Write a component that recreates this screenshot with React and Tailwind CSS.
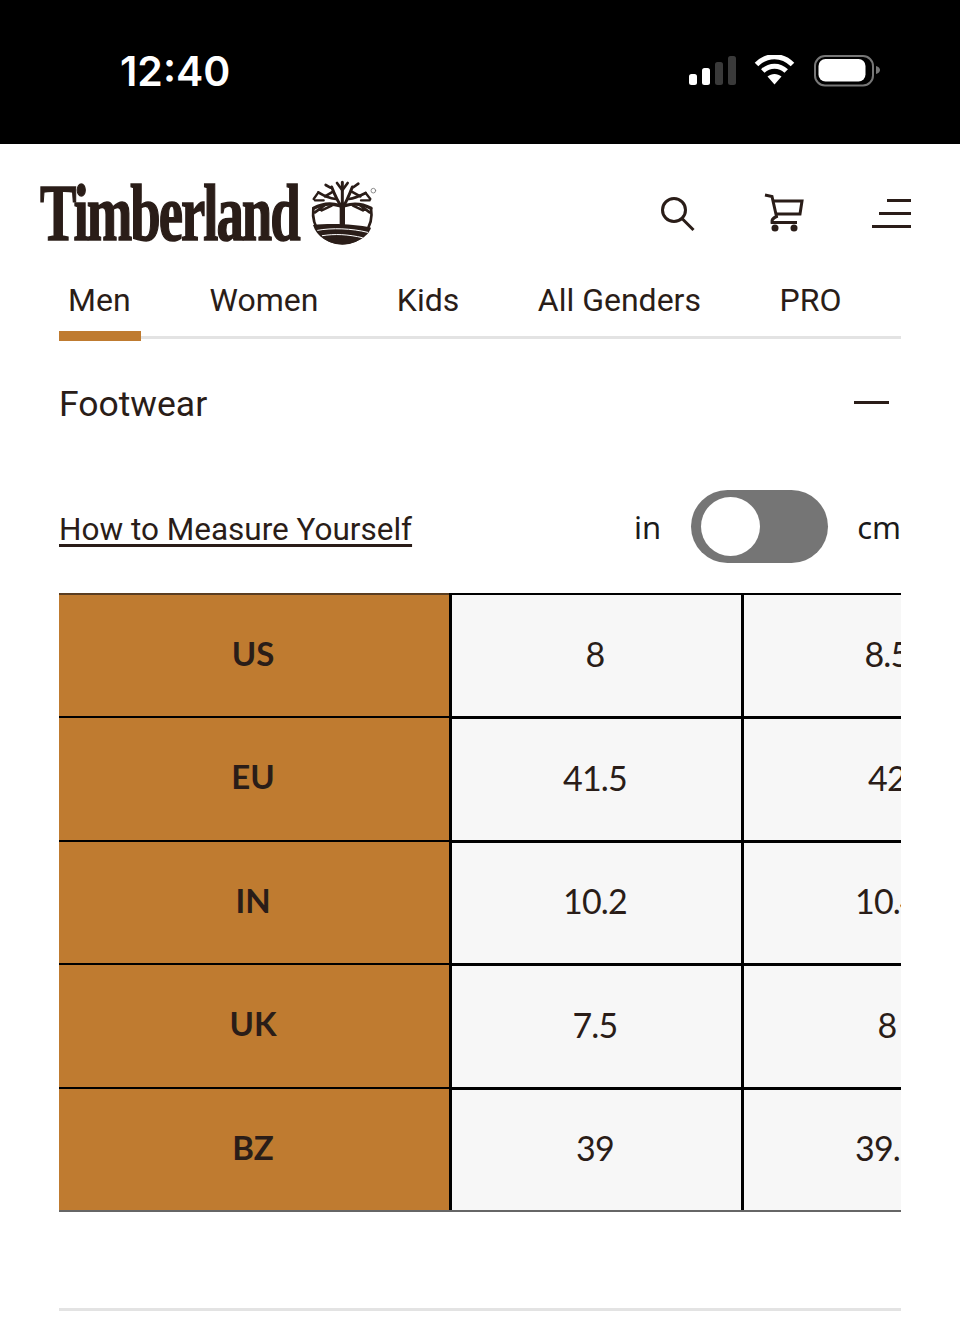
import React from 'react'

const tabs = ['Men', 'Women', 'Kids', 'All Genders', 'PRO']

const rows = [
  { label: 'US', values: ['8', '8.5'] },
  { label: 'EU', values: ['41.5', '42'] },
  { label: 'IN', values: ['10.2', '10.4'] },
  { label: 'UK', values: ['7.5', '8'] },
  { label: 'BZ', values: ['39', '39.5'] },
]

function StatusIcons() {
  return (
    <svg width="192" height="32" viewBox="689 56 192 32" fill="none">
      <rect x="689" y="75" width="8" height="11" rx="2.5" fill="#fff" />
      <rect x="702" y="69" width="8" height="17" rx="2.5" fill="#fff" />
      <rect x="715" y="63" width="8" height="23" rx="2.5" fill="#3a3a3a" />
      <rect x="728" y="57" width="8" height="29" rx="2.5" fill="#3a3a3a" />
      <path d="M756.5 65.5C767 55 782 55 792.5 65.5" stroke="#fff" strokeWidth="5" />
      <path d="M762.8 72C769.5 65.5 779.5 65.5 786.2 72" stroke="#fff" strokeWidth="5" />
      <path d="M767.5 77.5C771.5 74 777.5 74 781.5 77.5L774.5 85.5Z" fill="#fff" />
      <rect x="815" y="57" width="58" height="29.5" rx="10" stroke="#777" strokeWidth="2" />
      <rect x="818.5" y="60" width="47" height="22.5" rx="7" fill="#fff" />
      <path d="M876 67C879 68 880 69.5 880 71C880 72.500 879 74 876 75Z" fill="#777" />
    </svg>
  )
}

function TreeLogo() {
  return (
    <svg width="75" height="75" viewBox="0 0 225 225" fill="none" stroke="#2a1d18" strokeLinecap="round">
      {/* ring and ground */}
      <path d="M25 100C18 160 60 205 112 205C165 205 208 160 198 100" strokeWidth="8" />
      <path d="M24 150C70 144 150 146 198 158C190 185 150 208 112 208C70 208 35 185 24 150Z" fill="#2a1d18" stroke="none" />
      <path d="M38 166C80 158 140 160 188 172" stroke="#fff" strokeWidth="3" />
      <path d="M52 182C90 176 130 178 172 188" stroke="#fff" strokeWidth="3" />
      {/* trunk */}
      <path d="M112 152V92" strokeWidth="16" strokeLinecap="butt" />
      {/* canopy */}
      <path d="M112 100C100 82 90 62 80 36M112 100C124 82 132 62 142 36M112 100V22" strokeWidth="9" />
      <path d="M104 92C80 84 52 86 26 100M120 92C146 84 172 86 198 100" strokeWidth="10" />
      <path d="M92 72C76 70 56 62 40 52M132 72C148 70 166 62 182 54" strokeWidth="8" />
      <path d="M84 50L60 64M140 50L166 64M76 38L62 30M146 36L160 26M112 46L96 24M112 46L128 24" strokeWidth="8" />
      <path d="M62 88L30 112M162 88L194 112M80 92L50 106M144 92L174 106" strokeWidth="8" />
      <path d="M40 52L26 72M182 54L196 72M30 76L56 76M194 76L168 76" strokeWidth="7" />
      <circle cx="205" cy="47" r="7" strokeWidth="2.500" stroke="#777" />
    </svg>
  )
}

function Header() {
  return (
    <div className="flex items-start justify-between h-[126px] pl-[40px] pr-[49px] pt-[38px]">
      <div className="flex items-start">
        <div className="w-[265px] h-[64px]">
          <span className="block origin-left scale-x-[0.685] whitespace-nowrap font-['Liberation_Serif',serif] font-bold text-[80px] leading-[62px] tracking-[-3px] text-[#2a1d18] [-webkit-text-stroke:1.500px_#2a1d18]">
            Timberland
          </span>
        </div>
        <div className="-mt-[7px]">
          <TreeLogo />
        </div>
      </div>
      <div className="flex items-center gap-[68px] mt-[11px]">
        <svg width="36" height="38" viewBox="0 0 36 38" fill="none" stroke="#2a1d18" strokeWidth="3">
          <circle cx="14" cy="16" r="11.500" />
          <path d="M22 24.500L33.500 36" />
        </svg>
        <svg width="40" height="40" viewBox="0 0 40 40" fill="none" stroke="#2a1d18" strokeWidth="3">
          <path d="M1 2L8 3.500L12.500 23.500C9 25 7.500 27 8 29.500H33" />
          <path d="M9 8H38L36 21H12.500" />
          <circle cx="11" cy="35" r="3.500" fill="#2a1d18" stroke="none" />
          <circle cx="30" cy="35" r="3.500" fill="#2a1d18" stroke="none" />
        </svg>
        <div className="flex w-[39px] flex-col items-end gap-[10px]">
          <div className="h-[3px] w-[24px] bg-[#2a1d18]" />
          <div className="h-[3px] w-[32px] bg-[#2a1d18]" />
          <div className="h-[3px] w-[39px] bg-[#2a1d18]" />
        </div>
      </div>
    </div>
  )
}

function Tabs() {
  return (
    <div className="mx-[59px] flex h-[69px] gap-[58.500px] border-b-[3px] border-[#e3e3e3]">
      {tabs.map((tab, i) => (
        <div
          key={tab}
          className={`h-[71px] shrink-0 pt-[10px] text-[32px] leading-[40px] text-[#2a1d18] ${i === 0 ? 'w-[82px] border-b-[10px] border-[#bf7b30] pl-[9px]' : 'px-[10px]'}`}
        >
          {tab}
        </div>
      ))}
    </div>
  )
}

function SizeTable() {
  return (
    <div className="mx-[59px] overflow-hidden">
      {rows.map((row, r) => (
        <div key={row.label} className="flex h-[123.4px] w-[1000px]">
          <div className={`flex w-[390px] items-center justify-center bg-[#bf7b30] pb-[4px] pr-[2px] font-['Lato',sans-serif] text-[33px] font-bold text-[#2a1d18] ${r === 0 ? 'border-t-[2px] border-[#5a3d20]' : 'border-t-[2px] border-black'}`}>
            {row.label}
          </div>
          {row.values.map((value) => (
            <div
              key={value}
              className={`flex w-[292px] items-center justify-center border-l-[3px] border-black bg-[#f7f7f7] pb-[4px] pr-[3px] font-['Lato',sans-serif] text-[34px] tracking-[-0.8px] text-[#2a1d18] ${r === 0 ? 'border-t-[2px]' : 'border-t-[3px]'}`}
            >
              {value}
            </div>
          ))}
        </div>
      ))}
      <div className="h-[2px] bg-[#666]" />
    </div>
  )
}

export default function App() {
  return (
    <div className="h-[1322px] w-[960px] overflow-hidden bg-white font-['Roboto',sans-serif]">
      <div className="flex h-[144px] items-center justify-between bg-black pb-[2px] pl-[120px] pr-[79px]">
        <span className="mt-[2px] font-['Inter',sans-serif] text-[41px] font-semibold text-white">12:40</span>
        <StatusIcons />
      </div>
      <Header />
      <Tabs />
      <div className="mx-[59px] mt-[40px] flex h-[50px] items-center justify-between">
        <span className="text-[35.500px] leading-[50px] text-[#2a1d18]">Footwear</span>
        <div className="mb-[3px] mr-[12px] h-[3px] w-[35px] bg-[#2a1d18]" />
      </div>
      <div className="mx-[59px] mt-[61px] flex h-[73px] items-center justify-between">
        <a className="pt-[6px] text-[31.500px] leading-[40px] text-[#2a1d18] underline underline-offset-[4px]">How to Measure Yourself</a>
        <div className="flex items-center font-['Noto_Sans',sans-serif] text-[31px] text-[#1a1a1a]">
          <span className="pt-[2px]">in</span>
          <div className="ml-[30px] mr-[29px] flex h-[73px] w-[137px] items-center rounded-full bg-[#757575] pl-[10px]">
            <div className="h-[59px] w-[59px] rounded-full bg-white" />
          </div>
          <span className="pt-[2px]">cm</span>
        </div>
      </div>
      <div className="mt-[30px]">
        <SizeTable />
      </div>
      <div className="mx-[59px] mt-[96px] h-[3px] bg-[#e3e3e3]" />
    </div>
  )
}
